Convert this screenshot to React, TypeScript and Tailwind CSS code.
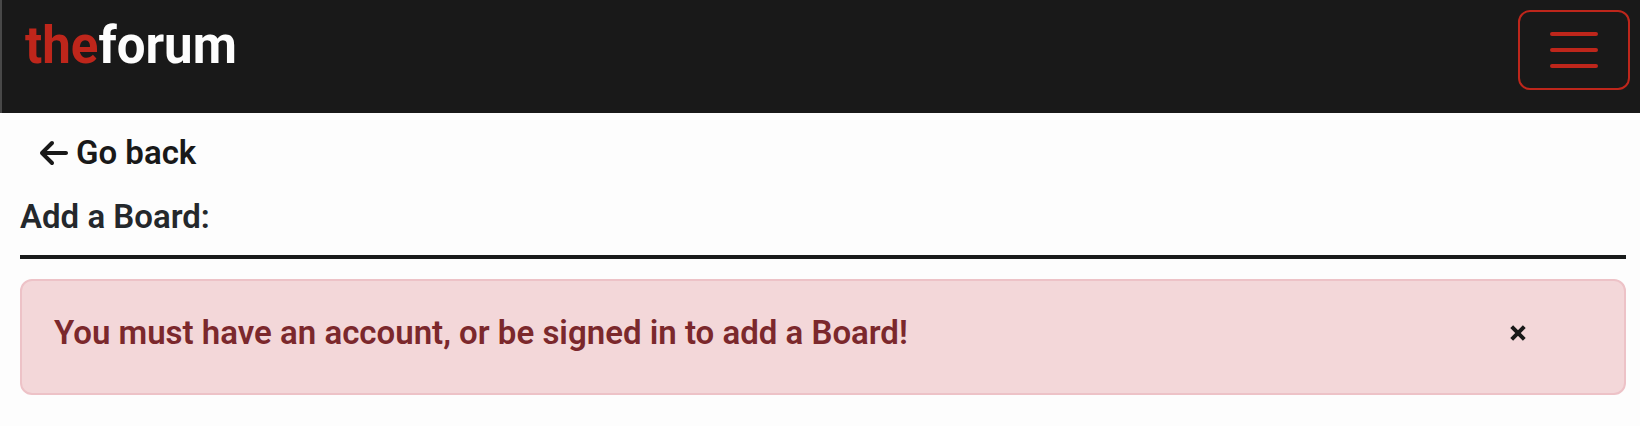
import { useState } from "react";
import { FaArrowLeft } from "react-icons/fa6";

function Header() {
  return (
    <header className="flex items-start justify-between border-l-2 border-[#484848] bg-[#191919] pt-[10px] pr-[10px] pb-[23px] pl-[23px]">
      <a href="#home" className="pt-1 text-[51px] leading-[64px] font-bold text-[#fdfdfd]">
        <span className="text-[#be261b]">the</span>forum
      </a>
      <button
        type="button"
        aria-label="Toggle navigation"
        className="flex h-20 w-28 items-center justify-center rounded-xl border-2 border-[#be261b] text-[#be261b]"
      >
        <svg viewBox="0 0 30 30" className="size-[60px]" fill="none" stroke="currentColor" strokeWidth="2" strokeLinecap="round" aria-hidden="true">
          <path d="M4 7h22M4 15h22M4 23h22" />
        </svg>
      </button>
    </header>
  );
}

function Alert({ onClose }: { onClose: () => void }) {
  return (
    <div role="alert" className="mt-5 flex items-center justify-between rounded-xl border-2 border-[#edc2c7] bg-[#f3d7d9] pt-7 pr-[90px] pb-9 pl-8 text-[#7b282c]">
      <p className="leading-[48px]">You must have an account, or be signed in to add a Board!</p>
      <button type="button" aria-label="Close" onClick={onClose} className="flex size-8 items-center justify-center text-[#191919]">
        <svg viewBox="0 0 16 16" className="size-4" stroke="currentColor" strokeWidth="4" aria-hidden="true">
          <path d="M1.7 1.7l12.6 12.6M14.3 1.7l-12.6 12.6" />
        </svg>
      </button>
    </div>
  );
}

export default function App() {
  const [open, setOpen] = useState(true);
  return (
    <div className="min-h-screen bg-[#fdfdfd] font-['Roboto',sans-serif] text-[33px] font-semibold">
      <Header />
      <main className="flex flex-col items-stretch pt-4 pr-[14px] pl-5">
        <a href="#back" className="ml-5 flex items-center gap-2 self-start leading-[48px] text-[#191919]">
          <FaArrowLeft className="h-8 w-7" aria-hidden="true" />
          Go back
        </a>
        <h1 className="mt-4 border-b-4 border-[#191b1b] pb-[14px] leading-[48px] text-[#24282c]">Add a Board:</h1>
        {open && <Alert onClose={() => setOpen(false)} />}
      </main>
    </div>
  );
}
